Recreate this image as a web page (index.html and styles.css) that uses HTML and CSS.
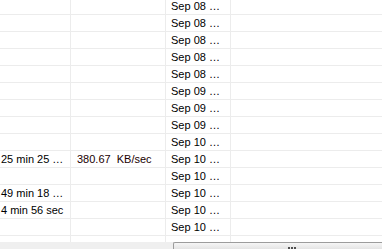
FILE: index.html
```html
<!DOCTYPE html>
<html>
<head>
<meta charset="utf-8">
<link rel="stylesheet" href="styles.css">
</head>
<body>
<div class="view">
  <div class="list">
    <div class="row"><div class="c c1"></div><div class="c c2"></div><div class="c c3">Sep 08 …</div><div class="c c4"></div></div>
    <div class="row"><div class="c c1"></div><div class="c c2"></div><div class="c c3">Sep 08 …</div><div class="c c4"></div></div>
    <div class="row"><div class="c c1"></div><div class="c c2"></div><div class="c c3">Sep 08 …</div><div class="c c4"></div></div>
    <div class="row"><div class="c c1"></div><div class="c c2"></div><div class="c c3">Sep 08 …</div><div class="c c4"></div></div>
    <div class="row"><div class="c c1"></div><div class="c c2"></div><div class="c c3">Sep 08 …</div><div class="c c4"></div></div>
    <div class="row"><div class="c c1"></div><div class="c c2"></div><div class="c c3">Sep 09 …</div><div class="c c4"></div></div>
    <div class="row"><div class="c c1"></div><div class="c c2"></div><div class="c c3">Sep 09 …</div><div class="c c4"></div></div>
    <div class="row"><div class="c c1"></div><div class="c c2"></div><div class="c c3">Sep 09 …</div><div class="c c4"></div></div>
    <div class="row"><div class="c c1"></div><div class="c c2"></div><div class="c c3">Sep 10 …</div><div class="c c4"></div></div>
    <div class="row"><div class="c c1">25 min 25 …</div><div class="c c2 speed">380.67  KB/sec</div><div class="c c3">Sep 10 …</div><div class="c c4"></div></div>
    <div class="row"><div class="c c1"></div><div class="c c2"></div><div class="c c3">Sep 10 …</div><div class="c c4"></div></div>
    <div class="row"><div class="c c1">49 min 18 …</div><div class="c c2"></div><div class="c c3">Sep 10 …</div><div class="c c4"></div></div>
    <div class="row"><div class="c c1">4 min 56 sec</div><div class="c c2"></div><div class="c c3">Sep 10 …</div><div class="c c4"></div></div>
    <div class="row"><div class="c c1"></div><div class="c c2"></div><div class="c c3">Sep 10 …</div><div class="c c4"></div></div>
    <div class="row"><div class="c c1"></div><div class="c c2"></div><div class="c c3"></div><div class="c c4"></div></div>
  </div>
</div>
<div class="hscroll">
  <div class="thumb"><span class="grip"><i></i><i></i><i></i></span></div>
</div>
</body>
</html>
```
FILE: styles.css
```css
html, body {
  margin: 0;
  padding: 0;
  background: #ffffff;
}
body {
  width: 382px;
  height: 249px;
  overflow: hidden;
  display: flex;
  flex-direction: column;
  font-family: "Liberation Sans", Arial, sans-serif;
  font-size: 11px;
  color: #000000;
}
.view {
  flex: 1;
  overflow: hidden;
}
.list {
  margin-top: -2px;
}
.row {
  display: grid;
  grid-template-columns: 71px 95px 65px 1fr;
  height: 17px;
}
.c {
  box-sizing: border-box;
  height: 17px;
  border-bottom: 1px solid #ececec;
  border-right: 1px solid #ececec;
  line-height: 16px;
  white-space: pre;
  overflow: hidden;
}
.c4 { border-right: none; }
.c1 { padding-left: 1px; }
.c2 { padding-left: 6px; }
.c3 { padding-left: 5px; }
.speed { color: #1a0000; }
.hscroll {
  height: 7px;
  flex: none;
  background: #efefef;
  display: flex;
}
.thumb {
  margin-left: 173px;
  flex: 1;
  box-sizing: border-box;
  border-top: 1px solid #9c9c9c;
  border-left: 1px solid #9c9c9c;
  border-top-left-radius: 2px;
  background: linear-gradient(#f6f6f6, #e4e4e4);
  position: relative;
}
.grip {
  position: absolute;
  left: 114px;
  top: 4px;
  display: flex;
  gap: 1px;
}
.grip i {
  display: block;
  width: 2px;
  height: 3px;
  background: #505050;
}
```
